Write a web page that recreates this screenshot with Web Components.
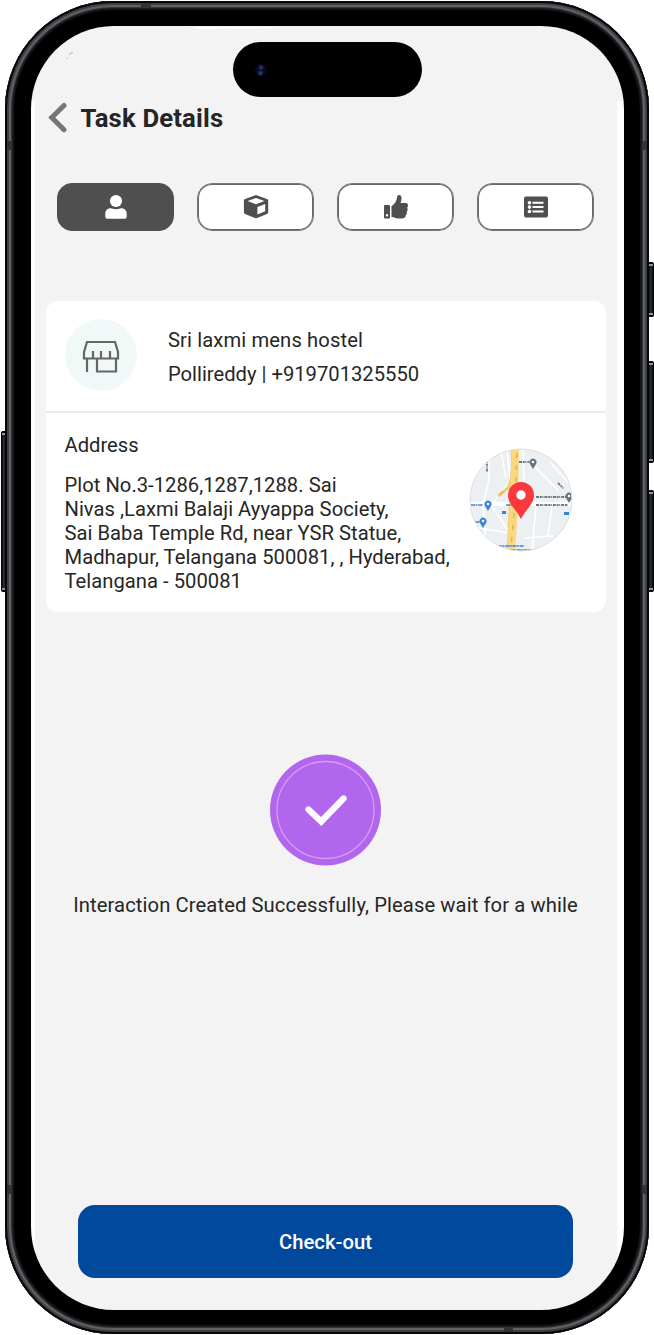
<!DOCTYPE html>
<html lang="en"><head><meta charset="utf-8"><title>Task Details</title>
<style>html,body{margin:0;background:#fff}body{width:654px;height:1335px;overflow:hidden;font-family:Roboto,"Liberation Sans",sans-serif;color:#262626}</style></head>
<body>
<phone-frame>
 <task-header>Task Details</task-header>
 <task-tabs></task-tabs>
 <place-card>
  <span slot="name">Sri laxmi mens hostel</span>
  <span slot="contact">Pollireddy | +919701325550</span>
  <span slot="label">Address</span>
  <span slot="address">Plot No.3-1286,1287,1288. Sai<br>Nivas ,Laxmi Balaji Ayyappa Society,<br>Sai Baba Temple Rd, near YSR Statue,<br>Madhapur, Telangana 500081, , Hyderabad,<br>Telangana - 500081</span>
 </place-card>
 <success-note>Interaction Created Successfully, Please wait for a while</success-note>
 <checkout-button>Check-out</checkout-button>
</phone-frame>
<script>
const define=(name,html)=>customElements.define(name,class extends HTMLElement{
 constructor(){super();this.attachShadow({mode:'open'}).innerHTML=html;}
});
define('phone-frame',`<style>
:host{display:block;box-sizing:border-box;position:relative;width:654px;height:1335px;padding:1px 5px}
.body{box-sizing:border-box;position:relative;height:1333px;padding:25px 25px 24px 26px;border-radius:108px;background:#000;box-shadow:inset 0 0 0 2px #050607,inset 0 0 1px 4px #3c3e42,inset 0 0 1px 6px #65676b,inset 0 0 1px 7px #303236,inset 0 0 1px 9px #17181a}
.screen{height:1284px;box-sizing:border-box;border-radius:83px;overflow:hidden;display:flex;flex-direction:column;background:linear-gradient(#f3f3f3 0 75px,transparent 75px),linear-gradient(90deg,#fff 0 4px,#f3f3f3 4px 586px,#fff 586px)}
.key{position:absolute;box-sizing:border-box;background:linear-gradient(90deg,#070809,#303438 45%,#050606);border:solid #050606;border-width:2px 1px;border-radius:2px}
.key:before,.key:after{content:"";position:absolute;left:0;right:0;height:2px;background:#92979b}.key:before{top:0}.key:after{bottom:0}
.island{position:absolute;left:233px;top:42px;width:189px;height:55px;border-radius:28px;background:#000}
.lens{position:absolute;left:22px;top:22px;width:12px;height:12px;border-radius:50%;background:radial-gradient(circle at 50% 30%,#303068 0 1px,transparent 3px),radial-gradient(circle at 45% 76%,#174869 0 1px,transparent 3px),#090923}
.seam{position:absolute;background:#303235}
.scratch{position:absolute;left:66px;top:51px}
</style>
<i class="key" style="left:1px;top:431px;width:6px;height:161px"></i>
<i class="key" style="left:648px;top:262px;width:6px;height:55px"></i>
<i class="key" style="left:648px;top:361px;width:6px;height:102px"></i>
<i class="key" style="left:648px;top:490px;width:6px;height:102px"></i>
<div class="body"><div class="screen"><slot></slot></div></div>
<i class="seam" style="left:141px;top:3px;width:10px;height:4px"></i><i class="seam" style="left:7px;top:141px;width:4px;height:9px"></i><i class="seam" style="left:643px;top:141px;width:4px;height:9px"></i><i class="seam" style="left:7px;top:1185px;width:4px;height:9px"></i><i class="seam" style="left:643px;top:1185px;width:4px;height:9px"></i><i class="seam" style="left:504px;top:1328px;width:9px;height:4px"></i>
<svg class="scratch" width="10" height="10" fill="none" stroke="#999" stroke-width=".8"><path d="M3 4Q4 1.5 7 1.5M.5 7.5h1"/></svg>
<svg style="position:absolute;left:190px;top:26px" width="100" height="4" fill="#fff"><path d="M0 1h90q-8 1-15 1-8-1-15 0-6 1-16 0-8 0-24 1-10 1-20-3"/></svg>
<div class="island"><i class="lens"></i></div>`);
define('task-header',`<style>:host{display:flex;align-items:center;gap:12.5px;margin:74px 0 0 17px;height:36px;font-size:25.7px;font-weight:700;color:#252525}svg{flex:none}h1{font:inherit;letter-spacing:.16px;margin:0;white-space:nowrap}</style>
<svg width="20" height="32" viewBox="0 0 20 32" fill="none" stroke="#757575" stroke-width="5" stroke-linecap="round" stroke-linejoin="miter"><path d="M16 3.5 3.8 15.5 16 27.7"/></svg><h1><slot></slot></h1>`);
define('task-tabs',`<style>:host{display:grid;grid-template-columns:repeat(4,117px);gap:23px;margin:47px 0 0 26px}
button{box-sizing:border-box;height:48px;border:1px solid #777;box-shadow:inset 0 0 0 1px #666;border-radius:15px;background:#fff;padding:0;display:grid;place-items:center;color:#4f4f4f}button.on{background:#4f4f4f;border-color:#4f4f4f;box-shadow:none;color:#fff}svg{display:block}</style>
<button class="on" aria-label="Customer"><svg width="24" height="26" viewBox="0 0 24 26" fill="currentColor"><circle cx="12" cy="7" r="6.1"/><path d="M1.3 20c0-4 2.5-5.7 6-5.7 3 1.2 6.4 1.2 9.4 0 3.6 0 6 1.7 6 5.7v2.7q0 2-2 2H3.3q-2 0-2-2Z"/></svg></button>
<button aria-label="Package"><svg width="26" height="26" viewBox="0 0 26 26" fill="currentColor"><path fill-rule="evenodd" d="m13 1 11 4.1q1.2.5 1.2 1.7v11.5q0 1.3-1.2 1.8L14 24q-1 .4-2 0L2 20.1Q.9 19.6.9 18.3V6.8q0-1.2 1.1-1.7Zm0 2.9L4.5 7l8.5 3.2L21.5 7ZM14.4 13.1v7.4l7.8-3.2V9.9Z"/></svg></button>
<button aria-label="Feedback"><svg width="26" height="26" viewBox="0 0 26 26" fill="currentColor"><path fill-rule="evenodd" d="M2 11h4q1 0 1 1v11.5q0 1-1 1H2q-1 0-1-1V12q0-1 1-1m2 9a1.2 1.2 0 1 0 0 2.4A1.2 1.2 0 0 0 4 20M8.5 12.2c3-1.8 5.3-5.4 5.5-8.7.1-1.7 1-2.5 2.2-2.5 2.7 0 3 4 1.3 8h4.8c3 0 3.5 2.8 1.8 4.7 1 1.4.6 2.8-.4 4 .5 1.4 0 2.6-.9 3.4.1 2.3-1.3 3.5-4.2 3.5-5.8 0-7.3-1.6-10.1-1.7Z"/></svg></button>
<button aria-label="Form"><svg width="26" height="24" viewBox="0 0 26 24" fill="currentColor"><rect x="1" y="1.5" width="24" height="21" rx="2"/><g stroke="#fff" stroke-width="2"><path d="M9.5 7.7h11M9.5 12.1h11M9.5 16.5h11"/></g><g fill="#fff"><circle cx="6.5" cy="7.7" r="1.8"/><circle cx="6.5" cy="12.1" r="1.8"/><circle cx="6.5" cy="16.5" r="1.8"/></g></svg></button>`);
define('map-thumb',`<style>:host{display:block;width:104px;height:104px}svg{display:block}</style>
<svg width="104" height="104" viewBox="0 0 104 104"><defs><clipPath id="c"><circle cx="52" cy="52" r="51"/></clipPath></defs><g clip-path="url(#c)"><rect width="104" height="104" fill="#edf0f3"/>
<g fill="none" stroke="#fff" stroke-width="1.5"><path d="M0 56h104" stroke-width="4"/><path d="M20 9v23l-6 24 3 45M32 3l5 27M38 0l3 33-18 23M54 0l1 34M62 15l28 28M81 14l24 27M22 57l19 28M67 58l-4 46M83 58l-4 30M0 78l45 8M56 90l28-2"/></g>
<path d="M43-2 44 27 39 40 29 48M43 22l-4 82" fill="none" stroke="#f1cd78" stroke-width="3"/><path d="M43-2h7l-1 60-3 46h-8l3-50Z" fill="#fbd77d"/><path d="m48 5-2 50-4 44M31 47l7-8" fill="none" stroke="#dbb65f" stroke-width="1.5" stroke-dasharray="5 7"/>
<g fill="#62747f"><path d="m64 21-3-5a3.5 3.5 0 1 1 6 0ZM100 55l-3-5a3.5 3.5 0 1 1 6 0Z"/></g><g fill="#fff"><circle cx="64" cy="14" r="1.3"/><circle cx="100" cy="48" r="1.3"/></g>
<g fill="#3b83d1"><path d="m19 63-3-5a3.5 3.5 0 1 1 6 0ZM14 80l-3-5a3.5 3.5 0 1 1 6 0Z"/><rect x="33" y="63" width="4" height="3"/><path d="M85 12h2v2h-2zM95 64h5v3h-5z"/></g><g fill="#fff"><circle cx="19" cy="56" r="1.3"/><circle cx="14" cy="73" r="1.3"/></g>
<g fill="none" stroke="#70777c" stroke-width="1.8" stroke-dasharray="3 .8 2 .6 1 1"><path d="M50 14h10M67 49h30M67 57h32M18 12v12M89 35l6 6"/></g><g fill="none" stroke="#3c81d5" stroke-width="1.7" stroke-dasharray="4 .5 2 .7"><path d="M2 57h12M6 74h5M29 98h26M40 102h23M37 57h6"/></g></g>
<circle cx="52" cy="52" r="51" fill="none" stroke="#dedfe1"/><path d="M52 71C47 61 39 56 39 47a13 13 0 0 1 26 0c0 9-8 14-13 24Z" fill="#fb383c"/><circle cx="52" cy="47" r="4.7" fill="#fff"/></svg>`);
define('place-card',`<style>:host{display:block;box-sizing:border-box;width:560px;height:311px;margin:70px 0 0 15px;background:#fff;border-radius:12px;font-size:20.2px}
.top{display:flex;height:112px;box-sizing:border-box;padding:18px 19px 0;border-bottom:2px solid #ebebeb;gap:31px}.icon{width:72px;height:72px;border-radius:50%;background:#f1f8f8;display:grid;place-items:center;flex:none}.who{display:grid;grid-template-rows:34px 34px;align-items:center;padding-top:4px;height:68px;white-space:nowrap}.name{letter-spacing:.12px}
.bottom{display:grid;grid-template-columns:404px 104px;padding:20px 18.5px 0}.label{height:24px;line-height:24px}.address{margin-top:16px;line-height:24.1px;letter-spacing:.03px;white-space:nowrap}map-thumb{margin-top:15px}svg{display:block}.icon svg{margin-top:3px}</style>
<div class="top"><div class="icon"><svg width="38" height="34" viewBox="0 0 38 34" fill="none" stroke="#666" stroke-width="2.2"><path d="M5 2h28l3 10v6.5H2V12ZM11 18v-7M19 18v-7M28 18v-7M5 18v14M15 18v13.5h19V18"/></svg></div><div class="who"><span class="name"><slot name="name"></slot></span><slot name="contact"></slot></div></div>
<div class="bottom"><div><div class="label"><slot name="label"></slot></div><div class="address"><slot name="address"></slot></div></div><map-thumb></map-thumb></div>`);
define('success-note',`<style>:host{display:flex;flex-direction:column;align-items:center;margin:142px 4px 0 0;font-size:20.2px;white-space:nowrap}svg{display:block}div{margin-top:26px;line-height:26px;letter-spacing:.1px}</style><svg width="112" height="112" viewBox="0 0 112 112"><circle cx="55.5" cy="56" r="55.5" fill="#b266ed"/><circle cx="55.5" cy="56" r="48.5" fill="none" stroke="#d59bf8" stroke-width="1.3"/><path d="m38.5 55.5 12.7 12L73.5 44.5" fill="none" stroke="#fff" stroke-width="6.3" stroke-linecap="round"/></svg><div><slot></slot></div>`);
define('checkout-button',`<style>:host{display:block;margin:auto 51px 32px 47px}button{display:block;width:495px;height:73px;border:0;border-radius:17px;background:#00499c;color:#fff;font:500 20.3px Roboto,"Liberation Sans",sans-serif;padding:1px 0 0}</style><button><slot></slot></button>`);
</script></body></html>
